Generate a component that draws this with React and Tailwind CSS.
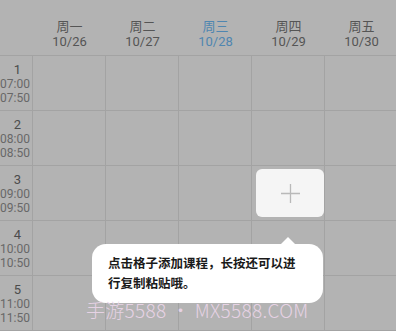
import React from "react";

const days = [
  { w: "周一", d: "10/26" },
  { w: "周二", d: "10/27" },
  { w: "周三", d: "10/28", active: true },
  { w: "周四", d: "10/29" },
  { w: "周五", d: "10/30" },
];
const rows = [
  ["1", "07:00", "07:50"],
  ["2", "08:00", "08:50"],
  ["3", "09:00", "09:50"],
  ["4", "10:00", "10:50"],
  ["5", "11:00", "11:50"],
];

const font = { fontFamily: "Roboto, 'Noto Sans CJK SC', sans-serif" };

export default function App() {
  return (
    <div className="relative w-[396px] h-[331px] overflow-hidden bg-[#b3b3b3]" style={font}>
      <div className="grid grid-cols-[33px_73px_73px_73px_73px_73px] w-[398px]">
        <div className="h-[56px] border-b border-[#a3a3a3]" />
        {days.map((d) => (
          <div
            key={d.d}
            className={`h-[56px] border-b border-[#a3a3a3] flex flex-col items-center justify-center pt-[12px] text-[13px] leading-[16px] ${d.active ? "text-[#4f86b0]" : "text-[#555555]"}`}
          >
            <span style={{ fontFamily: "'Noto Sans CJK SC', sans-serif" }}>{d.w}</span>
            <span>{d.d}</span>
          </div>
        ))}
        {rows.map((r) => (
          <React.Fragment key={r[0]}>
            <div className="h-[55px] border-b border-r border-[#a3a3a3] flex flex-col items-end justify-center pr-[2px] pt-[1px]">
              <span className="text-[13px] leading-[15px] text-[#4c4c4c] pr-[9px]">{r[0]}</span>
              <span className="text-[12px] leading-[14px] text-[#686868]">{r[1]}</span>
              <span className="text-[12px] leading-[14px] text-[#686868]">{r[2]}</span>
            </div>
            {days.map((d) => (
              <div key={d.d} className="h-[55px] border-b border-r border-[#a3a3a3]" />
            ))}
          </React.Fragment>
        ))}
      </div>

      <div className="absolute left-[256px] top-[169px] w-[68px] h-[48px] rounded-[6px] bg-[#f5f5f5] flex items-center justify-center">
        <svg width="21" height="21" viewBox="0 0 21 21">
          <path d="M10.5 1v19M1 10.5h19" stroke="#b9b9b9" strokeWidth="1.3" />
        </svg>
      </div>

      <div className="absolute left-[92px] top-[244px] w-[231px] h-[59px] rounded-[14px] bg-white pl-[16px] pt-[9px]">
        <div className="absolute left-[188px] top-[-7px] w-0 h-0 border-l-[8px] border-r-[8px] border-b-[8px] border-l-transparent border-r-transparent border-b-white" />
        <p
          className="text-[12.5px] leading-[20px] font-bold text-[#1a1a1a]"
          style={{ fontFamily: "'Noto Sans CJK SC', sans-serif" }}
        >
          点击格子添加课程，长按还可以进
          <br />
          行复制粘贴哦。
        </p>
      </div>

      <div
        className="absolute left-[86px] top-[297px] text-[19px] leading-[26px] text-[#ecd6ea] opacity-90 whitespace-nowrap tracking-[0.3px]"
        style={{ fontFamily: "'Noto Sans CJK SC', sans-serif", fontWeight: 300 }}
      >
        手游5588 • MX5588.COM
      </div>
    </div>
  );
}
